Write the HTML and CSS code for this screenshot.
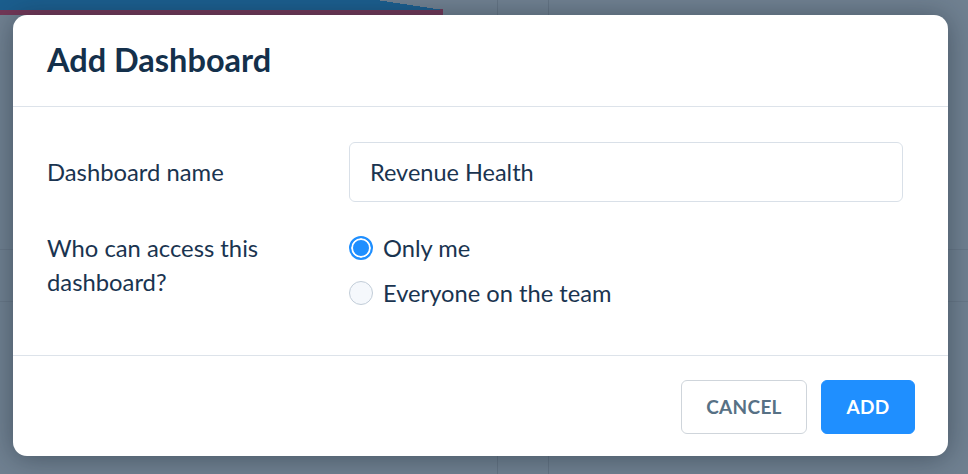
FILE: index.html
```html
<!DOCTYPE html>
<html lang="en">
<head>
<meta charset="utf-8">
<title>Add Dashboard</title>
<link rel="stylesheet" href="styles.css">
</head>
<body>
<div class="overlay">
  <div class="modal" role="dialog" aria-labelledby="modal-title">
    <div class="modal-header">
      <h2 class="modal-title" id="modal-title">Add Dashboard</h2>
    </div>
    <div class="modal-body">
      <div class="form-grid">
        <label class="field-label" for="dash-name">Dashboard name</label>
        <input class="text-input" id="dash-name" type="text" value="Revenue Health">
        <div class="field-label multiline">Who can access this dashboard?</div>
        <div class="radio-group">
          <label class="radio-option"><span class="radio checked"></span>Only me</label>
          <label class="radio-option"><span class="radio"></span>Everyone on the team</label>
        </div>
      </div>
    </div>
    <div class="modal-footer">
      <button class="btn btn-secondary" type="button">Cancel</button>
      <button class="btn btn-primary" type="button">Add</button>
    </div>
  </div>
</div>
</body>
</html>
```
FILE: styles.css
```css
* { box-sizing: border-box; }

html, body {
  margin: 0;
  height: 100%;
}

body {
  font-family: Lato, "Noto Sans", sans-serif;
  color: #17324e;
  background-color: #708191;
  background-image:
    linear-gradient(to bottom left, transparent 50%, #1b5e8e 50%),
    linear-gradient(#1b5e8e, #1b5e8e),
    linear-gradient(#733757, #733757),
    linear-gradient(#647484, #647484),
    linear-gradient(#647484, #647484),
    linear-gradient(#687888, #687888),
    linear-gradient(#687888, #687888);
  background-repeat: no-repeat;
  background-size:
    66px 10px,
    377px 10px,
    443px 6px,
    1px 100%,
    1px 100%,
    100% 1px,
    100% 1px;
  background-position:
    377px 0,
    0 0,
    0 9px,
    497px 0,
    548px 0,
    0 249px,
    0 301px;
  overflow: hidden;
}

.overlay {
  height: 100%;
  padding: 15px 20px 18px 13px;
}

.modal {
  width: 935px;
  height: 441px;
  background: #fff;
  border-radius: 14px;
  box-shadow: 0 2px 28px rgba(20, 30, 45, 0.45);
  display: flex;
  flex-direction: column;
  overflow: hidden;
}

.modal-header {
  height: 92px;
  padding: 0 34px;
  display: flex;
  align-items: center;
  border-bottom: 1px solid #dde3ea;
}

.modal-title {
  margin: 0;
  font-size: 32.5px;
  font-weight: 700;
  line-height: 1;
  color: #14304b;
}

.modal-body {
  padding: 35px 45px 45px 34px;
  border-bottom: 1px solid #dde3ea;
}

.form-grid {
  display: grid;
  grid-template-columns: 260px 1fr;
  column-gap: 42px;
  row-gap: 29px;
  align-items: center;
}

.field-label {
  font-size: 23.8px;
  line-height: 34px;
  color: #1a3450;
}

.field-label.multiline {
  align-self: start;
}

.text-input {
  height: 60px;
  width: 100%;
  border: 1px solid #d9e0e8;
  border-radius: 6px;
  padding: 0 20px;
  font-family: inherit;
  font-size: 23.5px;
  color: #1a3450;
  background: #fff;
  outline: none;
}

.radio-group {
  display: flex;
  flex-direction: column;
  gap: 11px;
  align-self: start;
}

.radio-option {
  height: 34px;
  display: flex;
  align-items: center;
  gap: 10px;
  font-size: 23.7px;
  color: #1a3450;
}

.radio {
  width: 24px;
  height: 24px;
  flex: none;
  border-radius: 50%;
  border: 1.5px solid #c2cdd8;
  background: #f5f8fc;
}

.radio.checked {
  border: 2px solid #1f8fff;
  background: #1f8fff;
  box-shadow: inset 0 0 0 2px #fff;
}

.modal-footer {
  flex: 1;
  display: flex;
  justify-content: flex-end;
  align-items: center;
  gap: 14px;
  padding: 1px 33px 0 0;
}

.btn {
  height: 54px;
  padding: 0;
  border-radius: 6px;
  font-family: inherit;
  font-size: 19px;
  font-weight: 700;
  letter-spacing: 0.3px;
  text-transform: uppercase;
  cursor: pointer;
}

.btn-secondary {
  width: 126px;
  background: #fff;
  border: 1px solid #cfd5db;
  color: #577185;
}

.btn-primary {
  width: 94px;
  background: #1f8fff;
  border: 1px solid #1f8fff;
  color: #fff;
}
```
